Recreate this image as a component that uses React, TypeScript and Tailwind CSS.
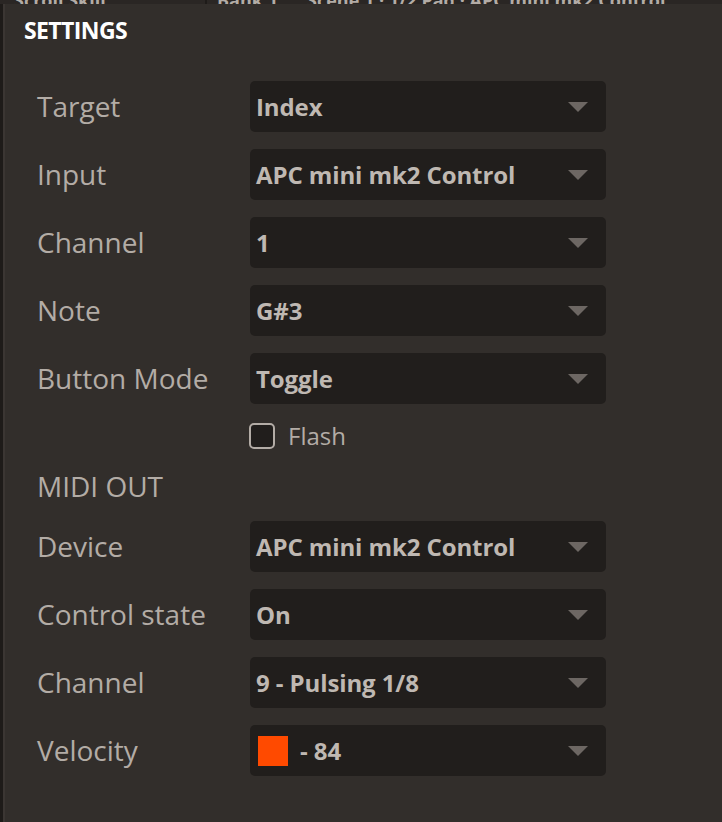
import React from "react";

const font = { fontFamily: '"Open Sans", "Noto Sans", sans-serif' };

function Arrow() {
  return (
    <svg width="20" height="10" viewBox="0 0 20 10" className="shrink-0">
      <polygon points="0,0 20,0 10,10" fill="#6d6763" />
    </svg>
  );
}

function Select({ value, swatch }: { value: string; swatch?: string }) {
  return (
    <div className="flex h-[51px] w-[356px] items-center justify-between rounded-[5px] bg-[#211e1c] pl-[6px] pr-[18px]">
      <div className="flex items-center gap-[12px]">
        {swatch && <div className="ml-[2px] h-[30px] w-[30px]" style={{ background: swatch }} />}
        <span className="text-[24px] font-bold leading-none tracking-[-0.1px] text-[#bfb8b2]">{value}</span>
      </div>
      <Arrow />
    </div>
  );
}

function Row({ label, value, swatch }: { label: string; value: string; swatch?: string }) {
  return (
    <div className="flex items-center">
      <div className="-mt-[2px] w-[213px] text-[28px] leading-none text-[#b3aca6]">{label}</div>
      <Select value={value} swatch={swatch} />
    </div>
  );
}

export default function App() {
  return (
    <div className="flex h-[822px] w-[722px] flex-col overflow-hidden bg-[#322e2b]" style={font}>
      <div className="flex h-[4px] shrink-0 overflow-hidden bg-[#2a2624]">
        <div className="-mt-[13px] flex text-[18px] font-bold whitespace-nowrap text-[#b3aca6]">
          <span className="w-[205px] pl-[14px]">Scroll Skill</span>
          <span className="w-[2px] bg-[#1e1b19]" />
          <span className="w-[88px] pl-[10px]">Bank 1</span>
          <span className="pl-[12px]">Scene 1 · 1/2 Pad · APC mini mk2 Control</span>
        </div>
      </div>
      <div className="flex flex-1">
        <div className="w-[3px] bg-[#1e1b19]" />
        <div className="w-[2px] bg-[#3b3633]" />
        <div className="flex flex-1 flex-col">
          <div className="pl-[19px] pt-[11px] text-[23px] font-bold leading-[30px] tracking-[-0.6px] text-white">
            SETTINGS
          </div>
          <div className="mt-[36px] flex flex-col gap-[17px] pl-[32px]">
            <Row label="Target" value="Index" />
            <Row label="Input" value="APC mini mk2 Control" />
            <Row label="Channel" value="1" />
            <Row label="Note" value="G#3" />
            <Row label="Button Mode" value="Toggle" />
          </div>
          <div className="mt-[19px] flex h-[26px] items-center gap-[13px] pl-[244px]">
            <div className="h-[26px] w-[26px] rounded-[5px] border-2 border-[#b3aca6] bg-[#211e1c]" />
            <span className="text-[24px] leading-none text-[#b3aca6]">Flash</span>
          </div>
          <div className="mt-[19px] h-[36px] pl-[32px] text-[28px] leading-[36px] text-[#b3aca6]">MIDI OUT</div>
          <div className="mt-[17px] flex flex-col gap-[17px] pl-[32px]">
            <Row label="Device" value="APC mini mk2 Control" />
            <Row label="Control state" value="On" />
            <Row label="Channel" value="9 - Pulsing 1/8" />
            <Row label="Velocity" value="- 84" swatch="#ff4a00" />
          </div>
        </div>
      </div>
    </div>
  );
}
